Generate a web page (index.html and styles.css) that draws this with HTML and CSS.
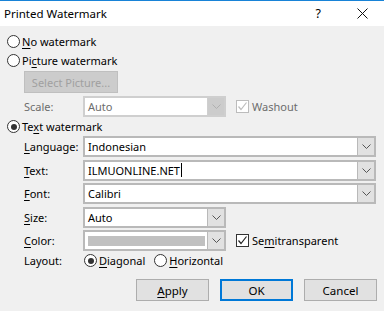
FILE: index.html
```html
<!DOCTYPE html>
<html lang="en">
<head>
    <meta charset="UTF-8">
    <title>Printed Watermark</title>
    <link rel="stylesheet" href="styles.css">
</head>
<body>
    <div class="dialog">
        <div class="titlebar">
            <span class="title">Printed Watermark</span>
            <span class="help">?</span>
            <span class="close">
                <svg width="11" height="11" viewBox="0 0 11 11"><path d="M0.5 0.5 L10.5 10.5 M10.5 0.5 L0.5 10.5" stroke="#111" stroke-width="1" fill="none"/></svg>
            </span>
        </div>

        <div class="content">
            <div class="radio-row"><span class="radio"></span><span><u>N</u>o watermark</span></div>
            <div class="radio-row"><span class="radio"></span><span>Pi<u>c</u>ture watermark</span></div>

            <div class="indent">
                <button class="btn btn-disabled">Select Picture...</button>
            </div>

            <div class="scale-row">
                <span class="label disabled-text">Scale:</span>
                <div class="combo short combo-disabled">
                    <span class="value">Auto</span>
                    <span class="drop"><svg width="9" height="5" viewBox="0 0 9 5"><path d="M0.5 0.5 L4.5 4.5 L8.5 0.5" stroke="#b0b0b0" fill="none"/></svg></span>
                </div>
                <span class="check check-disabled"><svg width="11" height="11" viewBox="0 0 11 11"><path d="M1.5 5.5 L4 8.5 L9.5 1.5" stroke="#bdbdbd" stroke-width="1.2" fill="none"/></svg></span>
                <span class="disabled-text">Washout</span>
            </div>

            <div class="radio-row"><span class="radio checked"></span><span>Te<u>x</u>t watermark</span></div>

            <div class="form">
                <span class="label"><u>L</u>anguage:</span>
                <div class="combo">
                    <span class="value">Indonesian</span>
                    <span class="drop"><svg width="9" height="5" viewBox="0 0 9 5"><path d="M0.5 0.5 L4.5 4.5 L8.5 0.5" stroke="#555" fill="none"/></svg></span>
                </div>

                <span class="label"><u>T</u>ext:</span>
                <div class="combo">
                    <span class="value">ILMUONLINE.NET<span class="caret"></span></span>
                    <span class="drop"><svg width="9" height="5" viewBox="0 0 9 5"><path d="M0.5 0.5 L4.5 4.5 L8.5 0.5" stroke="#555" fill="none"/></svg></span>
                </div>

                <span class="label"><u>F</u>ont:</span>
                <div class="combo">
                    <span class="value">Calibri</span>
                    <span class="drop"><svg width="9" height="5" viewBox="0 0 9 5"><path d="M0.5 0.5 L4.5 4.5 L8.5 0.5" stroke="#555" fill="none"/></svg></span>
                </div>

                <span class="label"><u>S</u>ize:</span>
                <div class="combo short">
                    <span class="value">Auto</span>
                    <span class="drop"><svg width="9" height="5" viewBox="0 0 9 5"><path d="M0.5 0.5 L4.5 4.5 L8.5 0.5" stroke="#555" fill="none"/></svg></span>
                </div>

                <span class="label"><u>C</u>olor:</span>
                <div class="color-row">
                    <div class="combo short">
                        <span class="value"><span class="swatch"></span></span>
                        <span class="drop"><svg width="9" height="5" viewBox="0 0 9 5"><path d="M0.5 0.5 L4.5 4.5 L8.5 0.5" stroke="#555" fill="none"/></svg></span>
                    </div>
                    <span class="check"><svg width="11" height="11" viewBox="0 0 11 11"><path d="M1.5 5.5 L4 8.5 L9.5 1.5" stroke="#222" stroke-width="1.2" fill="none"/></svg></span>
                    <span>Se<u>m</u>itransparent</span>
                </div>
            </div>

            <div class="layout-row">
                <span class="label">Layout:</span>
                <span class="radio checked"></span><span class="opt"><u>D</u>iagonal</span>
                <span class="radio"></span><span><u>H</u>orizontal</span>
            </div>

            <div class="buttons">
                <button class="btn"><u>A</u>pply</button>
                <button class="btn btn-default">OK</button>
                <button class="btn">Cancel</button>
            </div>
        </div>
    </div>
</body>
</html>
```

FILE: styles.css
```css
body {
    margin: 0;
    background: #f0f0f0;
    font-family: "Noto Sans", "Open Sans", sans-serif;
    font-size: 11px;
    color: #000;
}

.dialog {
    width: 384px;
    height: 311px;
    background: #f0f0f0;
}

.titlebar {
    height: 25px;
    border-top: 1px solid #1883d7;
    background: #fff;
    display: flex;
    align-items: center;
    padding: 0 16px 0 4px;
    font-size: 11.5px;
}

.title {
    flex: 1;
}

.help {
    margin-right: 36px;
    font-size: 12.5px;
}

.close {
    display: flex;
    align-items: center;
}

.content {
    padding: 6px 7px 0 7px;
}

u {
    text-decoration-thickness: 1px;
    text-underline-offset: 2px;
}

.radio-row {
    height: 19px;
    display: flex;
    align-items: center;
}

.radio {
    width: 11px;
    height: 11px;
    border: 1px solid #333;
    border-radius: 50%;
    background: #fff;
    margin-right: 2px;
    flex-shrink: 0;
    position: relative;
}

.radio.checked::after {
    content: "";
    position: absolute;
    left: 2.5px;
    top: 2.5px;
    width: 6px;
    height: 6px;
    border-radius: 50%;
    background: #333;
}

.indent {
    padding-left: 17px;
    margin-top: 1px;
}

.btn {
    font-family: inherit;
    font-size: 11.5px;
    height: 22px;
    width: 73px;
    padding: 0;
    background: #e1e1e1;
    border: 1px solid #adadad;
    color: #000;
}

.btn-disabled {
    width: 94px;
    font-size: 11px;
    background: #cccccc;
    border-color: #bfbfbf;
    color: #a0a0a0;
}

.btn-default {
    border: 2px solid #0078d7;
}

.scale-row {
    height: 21px;
    margin-top: 3px;
    padding-left: 17px;
    display: flex;
    align-items: center;
}

.label {
    width: 59px;
    flex-shrink: 0;
}

.disabled-text {
    color: #6d6d6d;
}

.combo {
    height: 21px;
    box-sizing: border-box;
    border: 2px solid #b9b9b9;
    background: #fff;
    display: flex;
    align-items: center;
}

.combo.short {
    width: 143px;
}

.value {
    flex: 1;
    padding-left: 3px;
    display: flex;
    align-items: center;
}

.drop {
    width: 16px;
    height: 17px;
    background: #e1e1e1;
    border-left: 1px solid #b9b9b9;
    display: flex;
    align-items: center;
    justify-content: center;
}

.combo-disabled {
    border-color: #cfcfcf;
}

.combo-disabled .value {
    color: #6d6d6d;
}

.combo-disabled .drop {
    background: #cccccc;
    border-left-color: #cfcfcf;
}

.check {
    width: 11px;
    height: 11px;
    border: 1px solid #333;
    background: #fff;
    margin: 0 3px 0 10px;
    display: flex;
    align-items: center;
    justify-content: center;
}

.check-disabled {
    border-color: #bcbcbc;
}

.form {
    display: grid;
    grid-template-columns: 59px 293px;
    grid-auto-rows: 21px;
    row-gap: 2.5px;
    align-items: center;
    padding-left: 17px;
}

.caret {
    display: inline-block;
    width: 1px;
    height: 14px;
    background: #000;
    margin-left: 1px;
}

.swatch {
    display: block;
    width: 117px;
    height: 10px;
    background: #c0c0c0;
}

.color-row {
    display: flex;
    align-items: center;
}

.layout-row {
    height: 19px;
    padding-left: 17px;
    display: flex;
    align-items: center;
}

.layout-row .label {
    width: 60px;
}

.layout-row .opt {
    margin-right: 9px;
}

.buttons {
    display: flex;
    justify-content: flex-end;
    gap: 11px;
    margin-top: 9px;
}
```
